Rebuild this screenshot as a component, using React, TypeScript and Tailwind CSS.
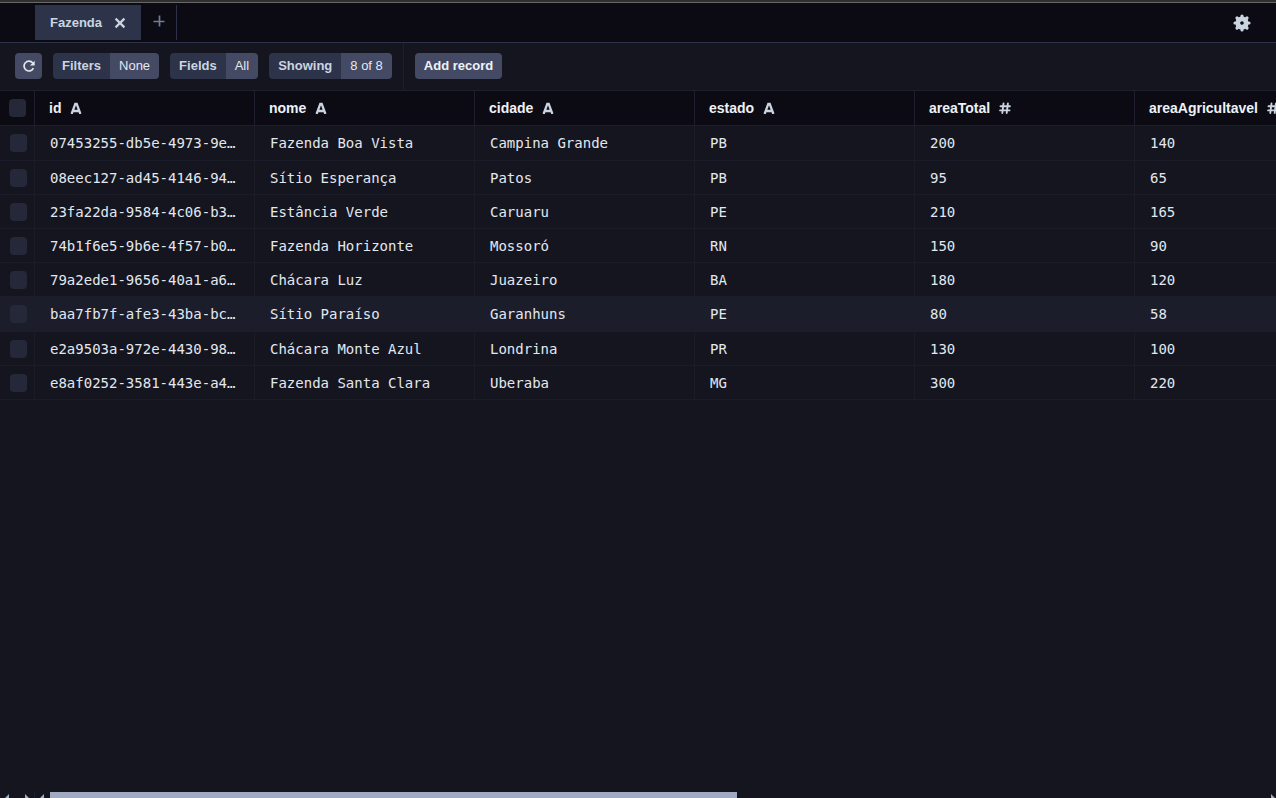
import { useState } from "react";

const columns = [
  { name: "id", numeric: false },
  { name: "nome", numeric: false },
  { name: "cidade", numeric: false },
  { name: "estado", numeric: false },
  { name: "areaTotal", numeric: true },
  { name: "areaAgricultavel", numeric: true },
];

const records = [
  ["07453255-db5e-4973-9e…", "Fazenda Boa Vista", "Campina Grande", "PB", "200", "140"],
  ["08eec127-ad45-4146-94…", "Sítio Esperança", "Patos", "PB", "95", "65"],
  ["23fa22da-9584-4c06-b3…", "Estância Verde", "Caruaru", "PE", "210", "165"],
  ["74b1f6e5-9b6e-4f57-b0…", "Fazenda Horizonte", "Mossoró", "RN", "150", "90"],
  ["79a2ede1-9656-40a1-a6…", "Chácara Luz", "Juazeiro", "BA", "180", "120"],
  ["baa7fb7f-afe3-43ba-bc…", "Sítio Paraíso", "Garanhuns", "PE", "80", "58"],
  ["e2a9503a-972e-4430-98…", "Chácara Monte Azul", "Londrina", "PR", "130", "100"],
  ["e8af0252-3581-443e-a4…", "Fazenda Santa Clara", "Uberaba", "MG", "300", "220"],
];

function TextIcon() {
  return (
    <svg aria-hidden="true" className="h-3 w-3" viewBox="0 0 12 12" fill="none" stroke="currentColor" strokeWidth="2.3">
      <path d="M1.6 12 5.3 1.9h1.4L10.4 12M3 9h6" />
    </svg>
  );
}

function NumberIcon() {
  return (
    <svg aria-hidden="true" className="h-3 w-3" viewBox="0 0 12 12" fill="none" stroke="currentColor" strokeWidth="1.9" strokeLinecap="round">
      <path d="M4.5 1.5 3.3 11M8.9 1.5 7.7 11M1.5 4.2h9.4M1.1 8.4h9.4" />
    </svg>
  );
}

function GearIcon() {
  return (
    <svg aria-hidden="true" className="h-[18px] w-[18px]" viewBox="0 0 18 18" fill="none" stroke="currentColor">
      <circle cx="9" cy="9" r="4.2" strokeWidth="4.8" />
      <path
        d="M9 2v1M9 15v1M2 9h1M15 9h1M4 4l1 1M13 13l1 1M14 4l-1 1M5 13l-1 1"
        strokeWidth="3.2"
        strokeLinecap="round"
      />
    </svg>
  );
}

function SplitButton({ label, value }: { label: string; value: string }) {
  return (
    <button className="flex h-[26px] overflow-hidden rounded text-[13px] leading-[26px]">
      <span className="bg-[#2d3348] px-[9px] font-bold text-[#cbd5e0]">{label}</span>
      <span className="bg-[#444a64] px-[9px] text-[#e2e8f0]">{value}</span>
    </button>
  );
}

function Check({ label, checked, onChange }: { label: string; checked: boolean; onChange: () => void }) {
  return (
    <input
      type="checkbox"
      aria-label={label}
      checked={checked}
      onChange={onChange}
      className="block h-[18px] w-[17px] appearance-none rounded bg-[#242838] checked:bg-[#5a67a8]"
    />
  );
}

export default function App() {
  const [selected, setSelected] = useState<number[]>([]);
  const toggle = (i: number) =>
    setSelected((s) => (s.includes(i) ? s.filter((n) => n !== i) : [...s, i]));
  const allSelected = selected.length === records.length;

  return (
    <div className="flex h-screen flex-col overflow-hidden bg-[#15151f] font-['Liberation_Sans',sans-serif] text-[#e2e8f0]">
      <div className="h-[3px] shrink-0 border-b border-[#686868] bg-[#303030]" />
      <header className="flex h-10 shrink-0 items-start justify-between border-b border-[#2d3148] bg-[#0c0b13] pl-[35px]">
        <nav className="flex h-full pt-[2px] pb-[2px]">
          <div className="flex items-center gap-3 bg-[#2d3348] pr-[15px] pl-[15px] text-[13px] font-bold text-[#cbd5e0]">
            <a href="#fazenda">Fazenda</a>
            <button aria-label="Close Fazenda">
              <svg className="h-3 w-3" viewBox="0 0 12 12" fill="none" stroke="currentColor" strokeWidth="2.2">
                <path d="m1.6 1.6 8.8 8.8m0-8.8-8.8 8.8" />
              </svg>
            </button>
          </div>
          <button aria-label="Open tab" className="flex w-9 items-center justify-center border-r border-[#2d3148] pb-1 text-[#717b96]">
            <svg className="h-3 w-3" viewBox="0 0 12 12" fill="none" stroke="currentColor" strokeWidth="1.7">
              <path d="M6.5.5v11M.5 6.5h11" />
            </svg>
          </button>
        </nav>
        <button aria-label="Settings" className="mr-[25px] flex h-full items-center text-[#cbd5e0]">
          <GearIcon />
        </button>
      </header>

      <div className="flex h-[47px] shrink-0 items-stretch">
        <div className="flex items-center gap-[11px] border-r border-[#1d1f2d] pr-[11px] pb-[2px] pl-[15px]">
          <button aria-label="Reload" className="flex h-[26px] w-[27px] items-center justify-center rounded bg-[#444a64]">
            <svg className="h-3 w-3" viewBox="0 0 12 12" fill="none" stroke="currentColor" strokeWidth="1.7">
              <path d="M10.4 8.2A4.9 4.9 0 1 1 9.8 3" />
              <path d="M11.7.7v4.8H6.9z" fill="currentColor" stroke="none" />
            </svg>
          </button>
          <SplitButton label="Filters" value="None" />
          <SplitButton label="Fields" value="All" />
          <SplitButton label="Showing" value="8 of 8" />
        </div>
        <div className="flex items-center pb-[2px] pl-[11px]">
          <button className="h-[26px] rounded bg-[#444a64] px-[9px] text-[13px] leading-[26px] font-bold text-[#edf2f7]">
            Add record
          </button>
        </div>
      </div>

      <main className="min-h-0 flex-1 overflow-hidden">
        <table className="w-[1355px] table-fixed border-separate border-spacing-0">
          <colgroup>
            <col className="w-[35px]" />
            {columns.map((c) => (
              <col key={c.name} className="w-[220px]" />
            ))}
          </colgroup>
          <thead className="bg-[#0c0b13]">
            <tr className="h-9">
              <th className="border-y border-r border-[#1d1f2d] p-0 pl-[9px]">
                <Check
                  label="Select all records"
                  checked={allSelected}
                  onChange={() => setSelected(allSelected ? [] : records.map((_, i) => i))}
                />
              </th>
              {columns.map((c) => (
                <th key={c.name} scope="col" className="border-y border-r border-[#1d1f2d] p-0 pl-[14px]">
                  <div className="flex items-center gap-[9px] text-sm font-bold text-[#edf2f7]">
                    {c.name}
                    <span className="text-[#cbd5e0]">{c.numeric ? <NumberIcon /> : <TextIcon />}</span>
                  </div>
                </th>
              ))}
            </tr>
          </thead>
          <tbody className="font-['DejaVu_Sans_Mono',monospace] text-sm">
            {records.map((r, i) => (
              <tr key={r[0]} className={i === 0 ? "h-[35px]" : i === 5 ? "h-[35px] bg-[#1b1d2b]" : "h-[34px]"}>
                <td className="border-r border-b border-[#1b1c29] p-0 pl-[10px]">
                  <Check label={"Select " + r[1]} checked={selected.includes(i)} onChange={() => toggle(i)} />
                </td>
                {r.map((v, j) => (
                  <td key={j} className="truncate border-r border-b border-[#1b1c29] p-0 pl-[15px]">
                    {v}
                  </td>
                ))}
              </tr>
            ))}
          </tbody>
        </table>
      </main>

      <div aria-hidden="true" className="flex h-[6px] shrink-0 items-end text-[#a0aec0]">
        <svg className="ml-[5px] h-1 w-1" viewBox="0 0 4 4" fill="currentColor"><path d="M4 0v4H0z" /></svg>
        <svg className="ml-4 h-1 w-1" viewBox="0 0 4 4" fill="currentColor"><path d="M0 0v4h4z" /></svg>
        <span className="ml-[5px] h-full w-px bg-[#1d1f2d]" />
        <svg className="ml-[5px] h-1 w-1" viewBox="0 0 4 4" fill="currentColor"><path d="M4 0v4H0z" /></svg>
        <div className="mr-[5px] ml-[6px] h-full flex-1">
          <div className="h-full w-[56.5%] bg-[#a0aac0]" />
        </div>
        <svg className="mr-px h-1 w-1" viewBox="0 0 4 4" fill="currentColor"><path d="M0 0v4h4z" /></svg>
      </div>
    </div>
  );
}
